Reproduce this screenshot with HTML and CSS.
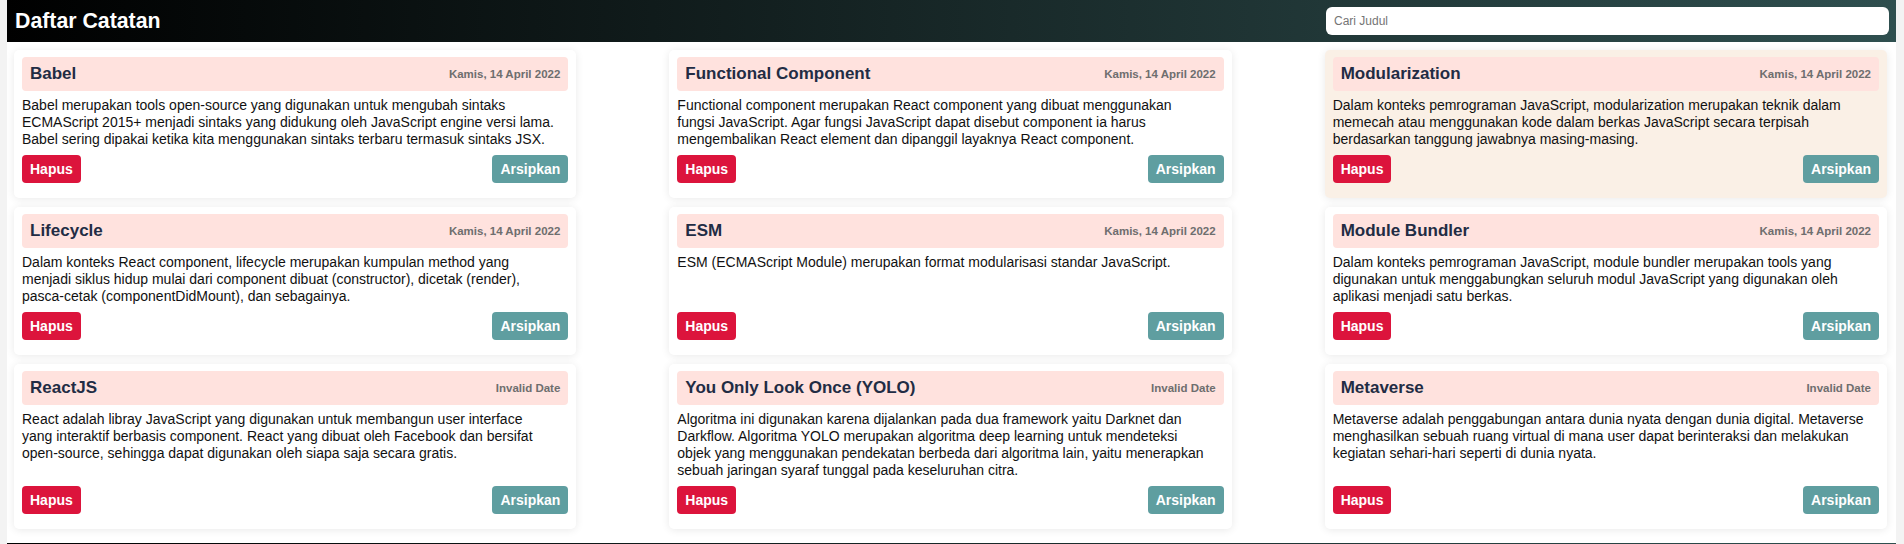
FILE: index.html
```html
<!DOCTYPE html>
<html lang="id">
<head>
<meta charset="utf-8">
<title>Daftar Catatan</title>
<link rel="stylesheet" href="styles.css">
</head>
<body>
<div class="app">
  <header class="app-header">
    <h1 class="app-title">Daftar Catatan</h1>
    <input class="search" type="text" placeholder="Cari Judul">
  </header>
  <main class="notes">
    <article class="note">
      <div class="note-head"><h3 class="note-title">Babel</h3><span class="note-date">Kamis, 14 April 2022</span></div>
      <p class="note-body">Babel merupakan tools open-source yang digunakan untuk mengubah sintaks ECMAScript 2015+ menjadi sintaks yang didukung oleh JavaScript engine versi lama. Babel sering dipakai ketika kita menggunakan sintaks terbaru termasuk sintaks JSX.</p>
      <div class="note-actions"><button class="btn btn-delete">Hapus</button><button class="btn btn-archive">Arsipkan</button></div>
    </article>
    <article class="note">
      <div class="note-head"><h3 class="note-title">Functional Component</h3><span class="note-date">Kamis, 14 April 2022</span></div>
      <p class="note-body">Functional component merupakan React component yang dibuat menggunakan fungsi JavaScript. Agar fungsi JavaScript dapat disebut component ia harus mengembalikan React element dan dipanggil layaknya React component.</p>
      <div class="note-actions"><button class="btn btn-delete">Hapus</button><button class="btn btn-archive">Arsipkan</button></div>
    </article>
    <article class="note note-active">
      <div class="note-head"><h3 class="note-title">Modularization</h3><span class="note-date">Kamis, 14 April 2022</span></div>
      <p class="note-body">Dalam konteks pemrograman JavaScript, modularization merupakan teknik dalam memecah atau menggunakan kode dalam berkas JavaScript secara terpisah berdasarkan tanggung jawabnya masing-masing.</p>
      <div class="note-actions"><button class="btn btn-delete">Hapus</button><button class="btn btn-archive">Arsipkan</button></div>
    </article>
    <article class="note">
      <div class="note-head"><h3 class="note-title">Lifecycle</h3><span class="note-date">Kamis, 14 April 2022</span></div>
      <p class="note-body">Dalam konteks React component, lifecycle merupakan kumpulan method yang menjadi siklus hidup mulai dari component dibuat (constructor), dicetak (render), pasca-cetak (componentDidMount), dan sebagainya.</p>
      <div class="note-actions"><button class="btn btn-delete">Hapus</button><button class="btn btn-archive">Arsipkan</button></div>
    </article>
    <article class="note">
      <div class="note-head"><h3 class="note-title">ESM</h3><span class="note-date">Kamis, 14 April 2022</span></div>
      <p class="note-body">ESM (ECMAScript Module) merupakan format modularisasi standar JavaScript.</p>
      <div class="note-actions"><button class="btn btn-delete">Hapus</button><button class="btn btn-archive">Arsipkan</button></div>
    </article>
    <article class="note">
      <div class="note-head"><h3 class="note-title">Module Bundler</h3><span class="note-date">Kamis, 14 April 2022</span></div>
      <p class="note-body">Dalam konteks pemrograman JavaScript, module bundler merupakan tools yang digunakan untuk menggabungkan seluruh modul JavaScript yang digunakan oleh aplikasi menjadi satu berkas.</p>
      <div class="note-actions"><button class="btn btn-delete">Hapus</button><button class="btn btn-archive">Arsipkan</button></div>
    </article>
    <article class="note">
      <div class="note-head"><h3 class="note-title">ReactJS</h3><span class="note-date">Invalid Date</span></div>
      <p class="note-body">React adalah libray JavaScript yang digunakan untuk membangun user interface yang interaktif berbasis component. React yang dibuat oleh Facebook dan bersifat open-source, sehingga dapat digunakan oleh siapa saja secara gratis.</p>
      <div class="note-actions"><button class="btn btn-delete">Hapus</button><button class="btn btn-archive">Arsipkan</button></div>
    </article>
    <article class="note">
      <div class="note-head"><h3 class="note-title">You Only Look Once (YOLO)</h3><span class="note-date">Invalid Date</span></div>
      <p class="note-body">Algoritma ini digunakan karena dijalankan pada dua framework yaitu Darknet dan Darkflow. Algoritma YOLO merupakan algoritma deep learning untuk mendeteksi objek yang menggunakan pendekatan berbeda dari algoritma lain, yaitu menerapkan sebuah jaringan syaraf tunggal pada keseluruhan citra.</p>
      <div class="note-actions"><button class="btn btn-delete">Hapus</button><button class="btn btn-archive">Arsipkan</button></div>
    </article>
    <article class="note">
      <div class="note-head"><h3 class="note-title">Metaverse</h3><span class="note-date">Invalid Date</span></div>
      <p class="note-body">Metaverse adalah penggabungan antara dunia nyata dengan dunia digital. Metaverse menghasilkan sebuah ruang virtual di mana user dapat berinteraksi dan melakukan kegiatan sehari-hari seperti di dunia nyata.</p>
      <div class="note-actions"><button class="btn btn-delete">Hapus</button><button class="btn btn-archive">Arsipkan</button></div>
    </article>
  </main>
  <footer class="app-footer"></footer>
</div>
</body>
</html>
```
FILE: styles.css
```css
* { box-sizing: border-box; }

html, body {
  margin: 0;
  padding: 0;
}

body {
  background: #f3f3f3;
  font-family: "Liberation Sans", Arial, sans-serif;
  color: #111;
  padding: 0 8px 0 7px;
}

.app {
  background: #fff;
}

.app-header {
  height: 42px;
  display: flex;
  align-items: center;
  justify-content: space-between;
  padding: 0 7px 0 8px;
  background: linear-gradient(to right, #000 0%, #2f4f4f 100%);
}

.app-title {
  margin: 0;
  color: #fff;
  font-size: 21.3px;
  font-weight: bold;
}

.search {
  width: 563px;
  height: 28px;
  border: none;
  border-radius: 6px;
  padding: 0 8px;
  font-family: "Liberation Sans", Arial, sans-serif;
  font-size: 12px;
  background: #fff;
  outline: none;
}

.search::placeholder {
  color: #757575;
}

.notes {
  display: grid;
  grid-template-columns: repeat(3, 1fr);
  column-gap: 93px;
  row-gap: 9px;
  padding: 8px 9px 14px 7px;
}

.note {
  display: flex;
  flex-direction: column;
  background: #fff;
  border-radius: 5px;
  box-shadow: 0 1px 8px rgba(0, 0, 0, 0.09);
  padding: 7px 8px 15px;
}

.note-active {
  background: #faf0e6;
}

.note-head {
  height: 34px;
  display: flex;
  align-items: center;
  justify-content: space-between;
  padding: 0 8px;
  background: #ffe2de;
  border-radius: 4px;
}

.note-title {
  margin: 0;
  font-size: 17px;
  font-weight: bold;
  color: #222c44;
}

.note-date {
  font-size: 11.5px;
  font-weight: bold;
  color: #6e6e6e;
}

.note-body {
  flex: 1;
  margin: 6px 0 0;
  padding-right: 13px;
  font-size: 14px;
  line-height: 17px;
  color: #111;
}

.note-actions {
  display: flex;
  justify-content: space-between;
  margin-top: 7px;
}

.btn {
  height: 28px;
  padding: 0 8px;
  border: none;
  border-radius: 4px;
  color: #fff;
  font-family: "Liberation Sans", Arial, sans-serif;
  font-size: 14px;
  font-weight: bold;
  cursor: pointer;
}

.btn-delete {
  background: #dc143c;
}

.btn-archive {
  background: #5f9ea0;
}

.app-footer {
  height: 40px;
  background: linear-gradient(to right, #000 0%, #2f4f4f 100%);
}
```
